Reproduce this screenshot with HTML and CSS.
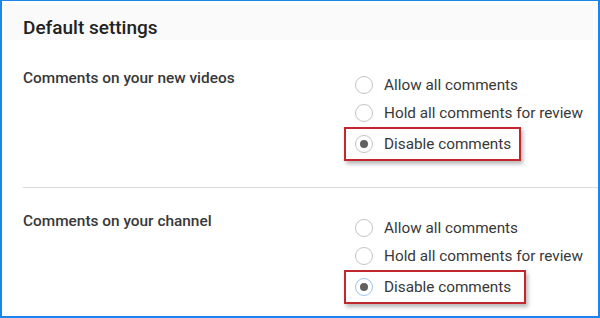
FILE: index.html
```html
<!DOCTYPE html>
<html lang="en">
  <head>
    <meta charset="UTF-8" />
    <meta name="viewport" content="width=device-width, initial-scale=1.0" />
    <title>Default settings</title>
    <link rel="stylesheet" href="styles.css">
  </head>

  <body>
    <div class="frame">
      <header class="panel-header">
        <h1>Default settings</h1>
      </header>

      <section class="setting">
        <h2 class="setting-label">Comments on your new videos</h2>
        <div class="options">
          <div class="option"><span class="radio"></span>Allow all comments</div>
          <div class="option"><span class="radio"></span>Hold all comments for review</div>
          <div class="option option-marked"><span class="radio checked"></span>Disable comments</div>
        </div>
      </section>

      <section class="setting setting-last">
        <h2 class="setting-label">Comments on your channel</h2>
        <div class="options">
          <div class="option"><span class="radio"></span>Allow all comments</div>
          <div class="option"><span class="radio"></span>Hold all comments for review</div>
          <div class="option option-marked option-wide"><span class="radio checked focus"></span>Disable comments</div>
        </div>
      </section>
    </div>
  </body>
</html>
```

FILE: styles.css
```css
*,
*::before,
*::after {
  box-sizing: border-box;
}
:root {
  --frame: #1a84ef;
  --header-bg: #fafafa;
  --text: #222222;
  --text-soft: #383838;
  --line: #dcdcdc;
  --mark: #c1272d;
}
body {
  margin: 0;
  font-family: Roboto, "Liberation Sans", sans-serif;
  color: var(--text);
  background: #fff;
}
.frame {
  width: 600px;
  height: 318px;
  border: solid var(--frame);
  border-width: 1px 2px 2px 2px;
  overflow: hidden;
}
.panel-header {
  margin: 3px 5px 0 2px;
  height: 36px;
  padding: 12px 0 0 19px;
  background: var(--header-bg);
}
.panel-header h1 {
  margin: 0;
  font-size: 19px;
  line-height: 24px;
  font-weight: 500;
  color: var(--text);
}
.setting {
  display: flex;
  margin-left: 21px;
  padding: 29px 0 26px;
  border-bottom: 1px solid var(--line);
}
.setting-last {
  padding-top: 24px;
  border-bottom: 0;
}
.setting-label {
  width: 332px;
  margin: 0;
  padding-top: 1px;
  font-size: 15.4px;
  line-height: 16px;
  font-weight: 500;
  color: var(--text-soft);
}
.options {
  display: flex;
  flex-direction: column;
  align-items: flex-start;
  padding-top: 2px;
}
.option {
  display: flex;
  align-items: center;
  height: 28px;
  gap: 11px;
  font-size: 15.3px;
  color: var(--text-soft);
}
.option-marked {
  height: 34px;
  margin: 0 0 0 -11px;
  padding: 0 8px 0 9px;
  border: 2px solid var(--mark);
  box-shadow: 2px 3px 4px rgba(0, 0, 0, 0.28);
}
.option-wide {
  padding-right: 13px;
}
.radio {
  position: relative;
  width: 18px;
  height: 18px;
  border: 1px solid #c4c4c4;
  border-radius: 50%;
  background: #fff;
  flex: none;
}
.radio.checked::after {
  content: "";
  position: absolute;
  left: 4px;
  top: 4px;
  width: 8px;
  height: 8px;
  border-radius: 50%;
  background: #616161;
}
.radio.focus {
  border-color: #9fc3ee;
}
```
